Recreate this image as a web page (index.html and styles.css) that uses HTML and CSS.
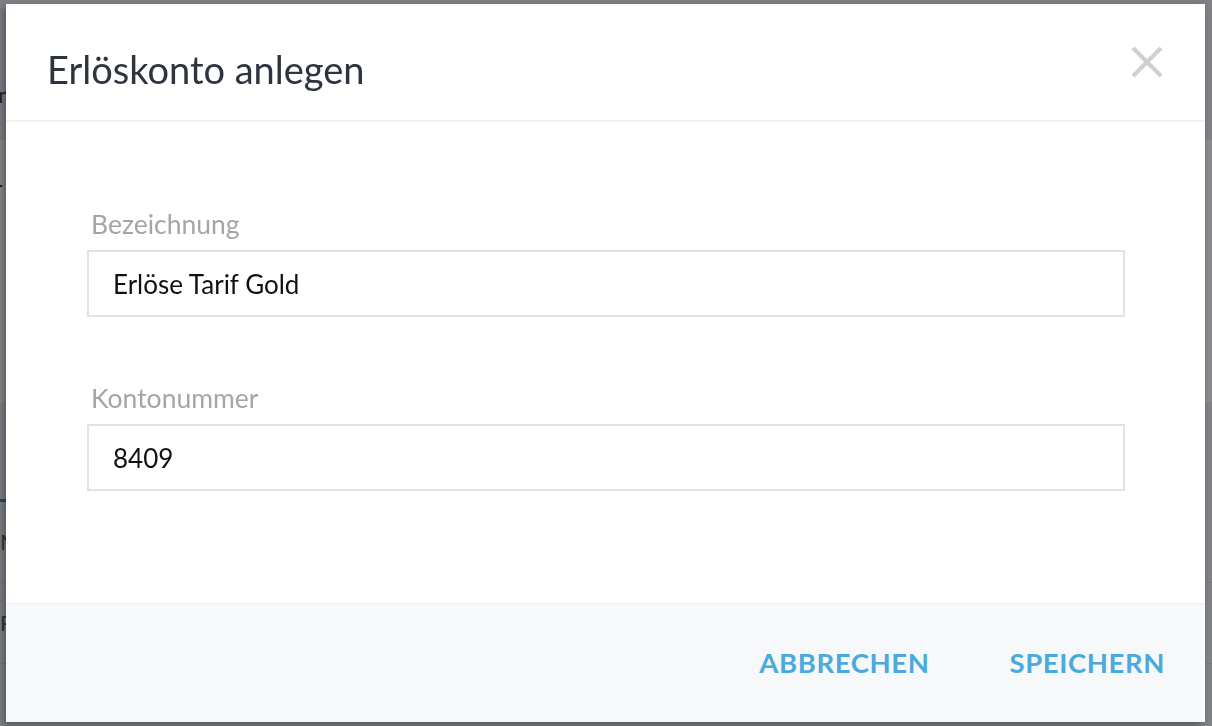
FILE: index.html
```html
<!DOCTYPE html>
<html lang="de">
<head>
  <meta charset="UTF-8">
  <title>Erlöskonto anlegen</title>
  <link rel="stylesheet" href="styles.css">
</head>
<body>
  <!-- Seite hinter dem Dialog -->
  <div class="page">
    <div class="page-top">Konto</div>
    <div class="panel">
      <div class="panel-title">—</div>
      <div class="panel-line">d</div>
      <div class="panel-line">c</div>
    </div>
    <div class="tabs"><span class="tab-active"></span></div>
    <div class="row">M</div>
    <div class="row">F</div>
  </div>

  <div class="overlay">
    <div class="modal">
      <div class="modal-header">
        <h1>Erlöskonto anlegen</h1>
        <button class="close" type="button" aria-label="Schließen">
          <svg width="32" height="32" viewBox="0 0 32 32">
            <path d="M2 2 L30 30 M30 2 L2 30" stroke="#cfcfcf" stroke-width="4" fill="none"/>
          </svg>
        </button>
      </div>
      <div class="modal-body">
        <label for="bezeichnung">Bezeichnung</label>
        <input type="text" id="bezeichnung" value="Erlöse Tarif Gold">

        <label for="kontonummer">Kontonummer</label>
        <input type="text" id="kontonummer" value="8409">
      </div>
      <div class="modal-footer">
        <button class="btn-text" type="button">ABBRECHEN</button>
        <button class="btn-text" type="button">SPEICHERN</button>
      </div>
    </div>
  </div>
</body>
</html>
```

FILE: styles.css
```css
body {
  margin: 0;
  font-family: 'Lato', 'Open Sans', sans-serif;
  background: #eceef1;
  color: #2d3540;
  height: 726px;
  overflow: hidden;
}

/* Hintergrundseite */
.page {
  font-size: 22px;
}
.page-top {
  height: 140px;
  line-height: 190px;
  margin-left: -28px;
}
.panel {
  background: #fff;
  height: 262px;
  padding-top: 30px;
  box-sizing: border-box;
  margin-left: -14px;
}
.panel-title {
  font-weight: bold;
  line-height: 30px;
}
.panel-line {
  line-height: 46px;
}
.tabs {
  height: 100px;
  position: relative;
}
.tab-active {
  display: block;
  position: absolute;
  left: 0;
  bottom: 0;
  width: 200px;
  height: 3px;
  background: #3a7fb5;
}
.row {
  height: 80px;
  line-height: 80px;
  border-bottom: 1px solid #d8dadd;
  color: #555;
}

/* Dialog */
.overlay {
  position: fixed;
  inset: 0;
  background: rgba(20, 22, 28, 0.5);
  padding: 4px 7px 4px 6px;
  display: flex;
}
.modal {
  flex: 1;
  background: #fff;
  display: flex;
  flex-direction: column;
  box-shadow: -3px 3px 8px rgba(0, 0, 0, 0.35);
}
.modal-header {
  height: 118px;
  border-bottom: 2px solid #f2f2f3;
  display: flex;
  align-items: center;
  justify-content: space-between;
  padding: 0 42px 0 41px;
  box-sizing: border-box;
}
.modal-header h1 {
  margin: 14px 0 0 0;
  font-weight: normal;
  font-size: 38px;
  color: #2c3440;
}
.close {
  background: none;
  border: 0;
  padding: 0;
  width: 32px;
  height: 32px;
  cursor: pointer;
}
.modal-body {
  flex: 1;
  padding: 86px 80px 0 81px;
  display: flex;
  flex-direction: column;
}
.modal-body label {
  font-size: 26.5px;
  color: #a3a5a8;
  padding-left: 4px;
  line-height: 32px;
  margin-bottom: 10px;
}
.modal-body input {
  font-family: inherit;
  font-size: 26px;
  color: #111;
  height: 67px;
  border: 2px solid #e0e3e6;
  padding: 0 24px;
  box-sizing: border-box;
  margin: 0 0 65px 0;
  outline: none;
}
.modal-footer {
  height: 119px;
  background: #f7f8fa;
  border-top: 1px solid #eeeff1;
  display: flex;
  justify-content: flex-end;
  align-items: center;
  gap: 80px;
  padding: 0 40px 0 0;
  box-sizing: border-box;
}
.btn-text {
  background: none;
  border: 0;
  padding: 0;
  font-family: inherit;
  font-size: 27.5px;
  font-weight: bold;
  color: #4ba9dd;
  letter-spacing: 0.6px;
  margin-top: -2px;
  cursor: pointer;
}
```
